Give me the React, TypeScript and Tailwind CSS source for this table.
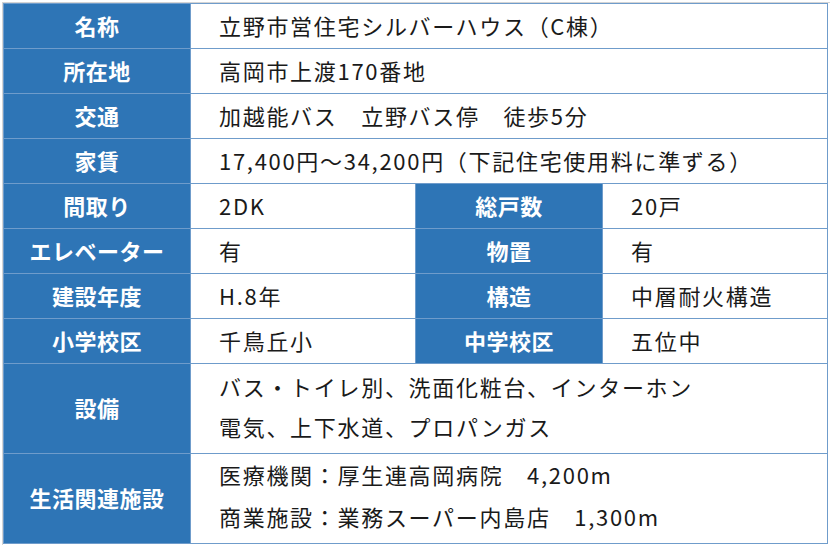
import React from "react";

const font = { fontFamily: '"Noto Sans CJK JP", "Noto Sans", sans-serif' };

function Label({ children, className = "" }: { children: React.ReactNode; className?: string }) {
  return (
    <div className={`bg-[#2e75b6] text-white font-bold text-[22px] tracking-[0.5px] flex items-center justify-center pb-[2px] ${className}`}>
      {children}
    </div>
  );
}

function Value({ children, className = "" }: { children: React.ReactNode; className?: string }) {
  return (
    <div className={`bg-white text-[#1a1a1a] text-[22px] tracking-[1.7px] flex items-center pl-[28px] ${className}`}>
      {children}
    </div>
  );
}

export default function App() {
  return (
    <div className="w-[834px] h-[547px] bg-white overflow-hidden" style={font}>
      <div className="pt-[2px] pl-[2px]">
        <div className="border-l border-t border-[#d4d4d4] w-[828px] h-[543px]">
          <div className="grid grid-cols-[186px_224px_186px_224px] grid-rows-[repeat(8,44px)_89px_89px] gap-px bg-[#6f9ccb] border border-[#6f9ccb] w-[825px]">
            <Label>名称</Label>
            <Value className="col-span-3 pb-[2px]">立野市営住宅シルバーハウス（C棟）</Value>

            <Label>所在地</Label>
            <Value className="col-span-3 pb-[2px]">高岡市上渡170番地</Value>

            <Label>交通</Label>
            <Value className="col-span-3 pb-[2px]">加越能バス　立野バス停　徒歩5分</Value>

            <Label>家賃</Label>
            <Value className="col-span-3 pb-[2px]">17,400円～34,200円（下記住宅使用料に準ずる）</Value>

            <Label>間取り</Label>
            <Value className="pb-[2px]">2DK</Value>
            <Label>総戸数</Label>
            <Value className="pb-[2px]">20戸</Value>

            <Label>エレベーター</Label>
            <Value className="pb-[2px]">有</Value>
            <Label>物置</Label>
            <Value className="pb-[2px]">有</Value>

            <Label>建設年度</Label>
            <Value className="pb-[2px]">H.8年</Value>
            <Label>構造</Label>
            <Value className="pb-[2px]">中層耐火構造</Value>

            <Label>小学校区</Label>
            <Value className="pb-[2px]">千鳥丘小</Value>
            <Label>中学校区</Label>
            <Value className="pb-[2px]">五位中</Value>

            <Label>設備</Label>
            <Value className="col-span-3 pb-[6px]">
              <div className="leading-[40px]">
                <div>バス・トイレ別、洗面化粧台、インターホン</div>
                <div>電気、上下水道、プロパンガス</div>
              </div>
            </Value>

            <Label>生活関連施設</Label>
            <Value className="col-span-3 pb-[7px]">
              <div className="leading-[42px]">
                <div>医療機関：厚生連高岡病院　4,200m</div>
                <div>商業施設：業務スーパー内島店　1,300m</div>
              </div>
            </Value>
          </div>
        </div>
      </div>
    </div>
  );
}
